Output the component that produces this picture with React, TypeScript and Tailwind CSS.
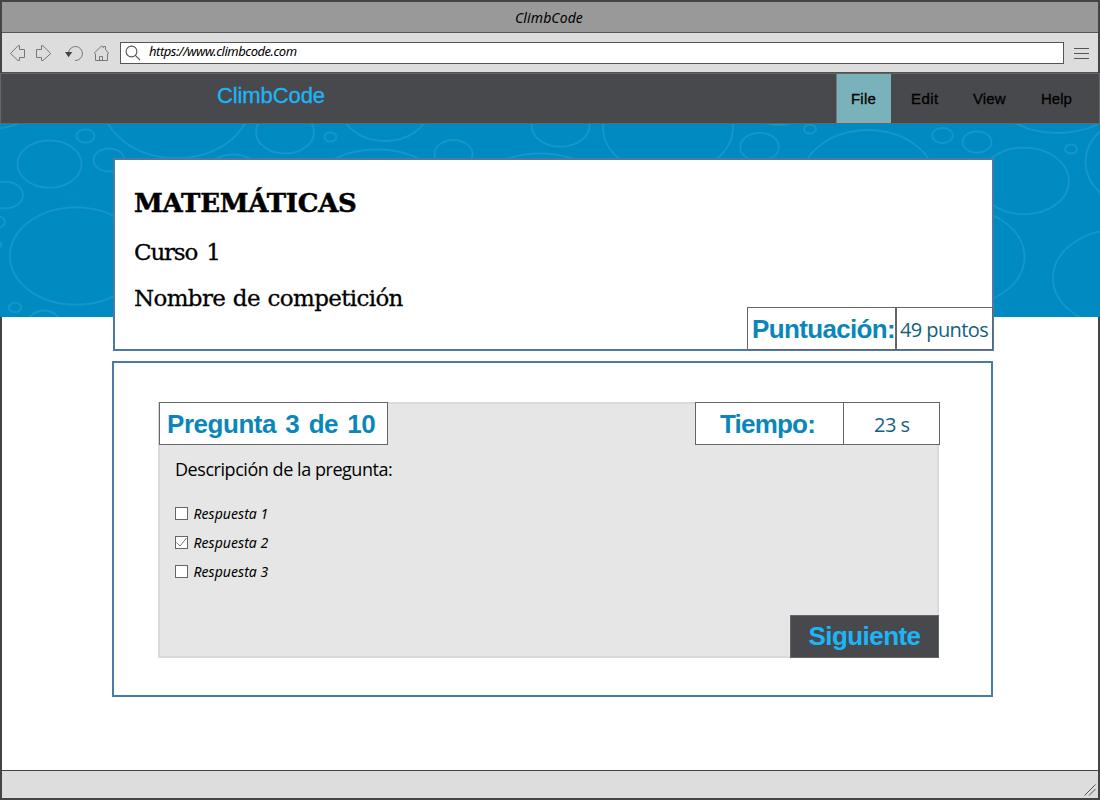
import type { ReactNode } from "react";

const bubbles: [number, number, number, number][] = [
  [-10, 90, 55, 39], [85.5, 136, 9, 6.7], [49.5, 164, 32, 23.7], [109, 160, 15.5, 11.5],
  [5, 195, 18, 13.3], [-4, 222, 9, 6], [-4, 244.5, 5, 4], [76, 256, 66, 48.7],
  [15, 307.5, 6.3, 4.6], [44, 321, 15, 10.5], [176.5, 104, 73, 54], [285, 132, 29, 21.5],
  [330.3, 137, 6, 4.5], [385, 109.5, 43, 31.5], [233, 174.5, 28, 20], [377, 205.5, 76, 56],
  [453.5, 154, 19, 14], [560.5, 125.5, 29, 21.2], [540, 211.5, 78, 58], [668, 127, 65, 48],
  [759.5, 147, 19.3, 14.2], [779, 103.5, 29, 21.5], [810, 129, 6, 4.5], [868, 181, 67, 51],
  [942.5, 135.5, 10.3, 7.6], [977, 142, 14.5, 10.7], [1024, 181, 45, 33.3], [1057.5, 79, 73, 54],
  [1071, 149, 6, 4.5], [1151.5, 162, 66, 48.6], [958.5, 257, 66, 48.6], [1119, 278, 66, 48.6],
];

function Banner() {
  return (
    <svg className="absolute top-0 -left-[2px] h-[193px] w-[1100px] bg-[#008ac2]" viewBox="0 124 1100 193">
      {bubbles.map(([cx, cy, rx, ry], i) => (
        <ellipse key={i} cx={cx} cy={cy} rx={rx} ry={ry} fill="none" stroke="#1697c9" strokeWidth="1.8" />
      ))}
    </svg>
  );
}

function Toolbar() {
  return (
    <div className="flex h-[40px] items-start border-b border-[#505050] bg-[#ddd] pl-[7px]">
      <svg className="mt-[10px] h-[19px] w-[17px] shrink-0" viewBox="9 43 17 19" fill="none" stroke="#777">
        <path d="M10.5 53.5 L18 45.8 L19.5 45.5 V49.5 H24.5 V57.5 H19.5 V60.5 L18 60.5 Z" />
      </svg>
      <svg className="mt-[10px] ml-[9px] h-[19px] w-[17px] shrink-0" viewBox="35 43 17 19" fill="none" stroke="#777">
        <path d="M50.8 53.5 L43 45.8 L41.5 45.5 V49.5 H36.5 V57.5 H41.5 V60.5 L43 60.5 Z" />
      </svg>
      <svg className="mt-[10px] ml-3 h-[19px] w-[20px] shrink-0" viewBox="64 43 20 19" fill="none" stroke="#777">
        <path d="M68.5 52.5 A7 7 0 1 1 75 60.5" />
        <path d="M65 52 H72.2 L68.6 57.3 Z" fill="#444" stroke="none" />
      </svg>
      <svg className="mt-[10px] ml-[9px] h-[19px] w-[17px] shrink-0" viewBox="93 43 17 19" fill="none" stroke="#777">
        <path d="M95.5 54 V60.5 H107.5 V54 L108.5 53 L105.5 49.5 V46.5 H103.5 V47.5 L101.5 46 L94.3 53 L95.5 54 M99.5 60.5 V56.5 H102.5 V60.5" />
      </svg>
      <div className="mt-[9px] ml-[10px] flex h-[22px] w-[944px] items-start border border-[#555] bg-white">
        <svg className="mt-[2px] ml-[4px] h-4 w-4 shrink-0" viewBox="125 45 16 16" fill="none" stroke="#555" strokeWidth="1.1">
          <circle cx="131.5" cy="51.5" r="5.4" />
          <path d="M135.3 55.3 L140 60" />
        </svg>
        <span className="ml-[8px] font-['Noto_Sans',sans-serif] text-[13px] leading-[16px] tracking-[-0.48px] text-black italic">
          https://www.climbcode.com
        </span>
      </div>
      <div className="mt-[15px] ml-[10px] flex w-[15px] flex-col gap-1">
        <span className="h-px bg-[#555]" />
        <span className="h-px bg-[#555]" />
        <span className="h-px bg-[#555]" />
      </div>
    </div>
  );
}

function Menu() {
  const item = "font-['Liberation_Sans',sans-serif] text-[15px] leading-[49px] text-black [-webkit-text-stroke:0.3px_black]";
  return (
    <nav className="flex h-[51px] border border-[#666] bg-[#48494d]">
      <div className="w-[835px] pl-[216px] font-['Liberation_Sans',sans-serif] text-[22px] leading-[43px] tracking-[-0.1px] text-[#1cb5f8] [-webkit-text-stroke:0.3px_#1cb5f8]">
        ClimbCode
      </div>
      <div className="w-[55px] border-l border-[#777] bg-[#7ab2bb] pl-[14px]">
        <span className={`${item} tracking-[0.2px]`}>File</span>
      </div>
      <span className={`${item} w-[62px] pl-[20px] tracking-[0.4px]`}>Edit</span>
      <span className={`${item} w-[68px] pl-[20px] tracking-[0.1px]`}>View</span>
      <span className={`${item} pl-[20px]`}>Help</span>
    </nav>
  );
}

function Answer({ checked, children }: { checked?: boolean; children: ReactNode }) {
  return (
    <label className="flex h-[29px] items-center">
      <span className="h-[13px] w-[13px] border border-[#666] bg-white">
        {checked && (
          <svg className="h-[11px] w-[11px]" viewBox="0 0 11 11" fill="none" stroke="#777">
            <path d="M0.5 5.5 L4 9 L10.5 1" />
          </svg>
        )}
      </span>
      <span className="ml-[5.5px] font-['Noto_Sans',sans-serif] text-[14px] leading-[29px] tracking-[0.05px] text-black italic">{children}</span>
    </label>
  );
}

export default function App() {
  const heading = "pt-px font-['Liberation_Sans',sans-serif] text-[26px] leading-[41px] font-bold whitespace-nowrap text-[#0a87b8]";
  const value = "pt-px font-['Open_Sans',sans-serif] text-[20px] leading-[41px] whitespace-nowrap text-[#15607f]";
  const serif = "font-['DejaVu_Serif',serif] leading-8 text-black";
  return (
    <div className="flex h-[800px] w-[1100px] flex-col bg-white">
      <div className="border-x-2 border-t-2 border-[#444]">
        <div className="flex h-[31px] items-center justify-center border-b border-[#555] bg-[#999] font-['Noto_Sans',sans-serif] text-[14px] tracking-[0.1px] text-black italic">
          <span className="mr-[2px]">ClimbCode</span>
        </div>
        <Toolbar />
      </div>
      <Menu />
      <main className="relative flex h-[646px] flex-col border-x-2 border-[#444]">
        <Banner />
        <section className="relative mt-[34px] ml-[111px] flex h-[193px] w-[881px] flex-col bg-white pt-[29px] pl-[21px] shadow-[inset_0_0_0_2px_#4a7ba8]">
          <h1 className={`${serif} text-[26px] font-bold tracking-[-0.25px] [-webkit-text-stroke:0.5px_black]`}>MATEMÁTICAS</h1>
          <p className={`${serif} mt-[17px] text-[23px] tracking-[-1.2px] [word-spacing:3px] [-webkit-text-stroke:0.3px_black]`}>Curso 1</p>
          <p className={`${serif} mt-[14px] text-[23px] tracking-[-0.65px] [word-spacing:1px] [-webkit-text-stroke:0.3px_black]`}>Nombre de competición</p>
          <div className="-mt-[7px] mr-px flex h-[43px] self-end">
            <div className={`${heading} w-[149px] border border-[#666] bg-white pl-[4px] tracking-[-0.65px]`}>Puntuación:</div>
            <div className={`${value} w-[97px] border border-[#666] bg-white pl-[3px] tracking-[-0.6px]`}>49 puntos</div>
          </div>
        </section>
        <section className="relative mt-[10px] ml-[110px] h-[336px] w-[881px] border-2 border-[#4a7ba8] bg-white pt-[39px] pl-[44px]">
          <div className="flex h-[256px] w-[781px] flex-col bg-[#e6e6e6] shadow-[inset_0_0_0_2px_#d6dbdf]">
            <div className="-mr-px ml-px flex h-[43px] justify-between">
              <div className={`${heading} w-[229px] border border-[#666] bg-white pl-[7px] tracking-[-0.45px] [word-spacing:2.5px]`}>Pregunta 3 de 10</div>
              <div className="flex">
                <div className={`${heading} w-[148px] border border-r-0 border-[#666] bg-white pl-[24px] tracking-[-0.8px]`}>Tiempo:</div>
                <div className={`${value} w-[97px] border border-[#666] bg-white pl-[30px] tracking-[-0.5px]`}>23 s</div>
              </div>
            </div>
            <p className="mt-[10px] pl-[17px] font-['Open_Sans',sans-serif] text-[18px] leading-7 tracking-[-0.45px] text-black">Descripción de la pregunta:</p>
            <div className="mt-4 pl-[17px]">
              <Answer>Respuesta 1</Answer>
              <Answer checked>Respuesta 2</Answer>
              <Answer>Respuesta 3</Answer>
            </div>
            <button className="mt-auto h-[43px] w-[149px] self-end border border-[#666] bg-[#48494d] font-['Liberation_Sans',sans-serif] text-[26px] leading-[41px] font-bold tracking-[-0.55px] text-[#1cb5f8]">
              Siguiente
            </button>
          </div>
        </section>
      </main>
      <footer className="flex h-[30px] items-end justify-end border-x-2 border-t border-b-2 border-[#444] bg-[#ddd]">
        <svg className="mr-[2px] mb-[2px] h-3 w-3" viewBox="0 0 12 12" stroke="#555">
          <path d="M0.5 11.5 L11.5 0.5 M5 11.5 L11.5 5" />
        </svg>
      </footer>
    </div>
  );
}
